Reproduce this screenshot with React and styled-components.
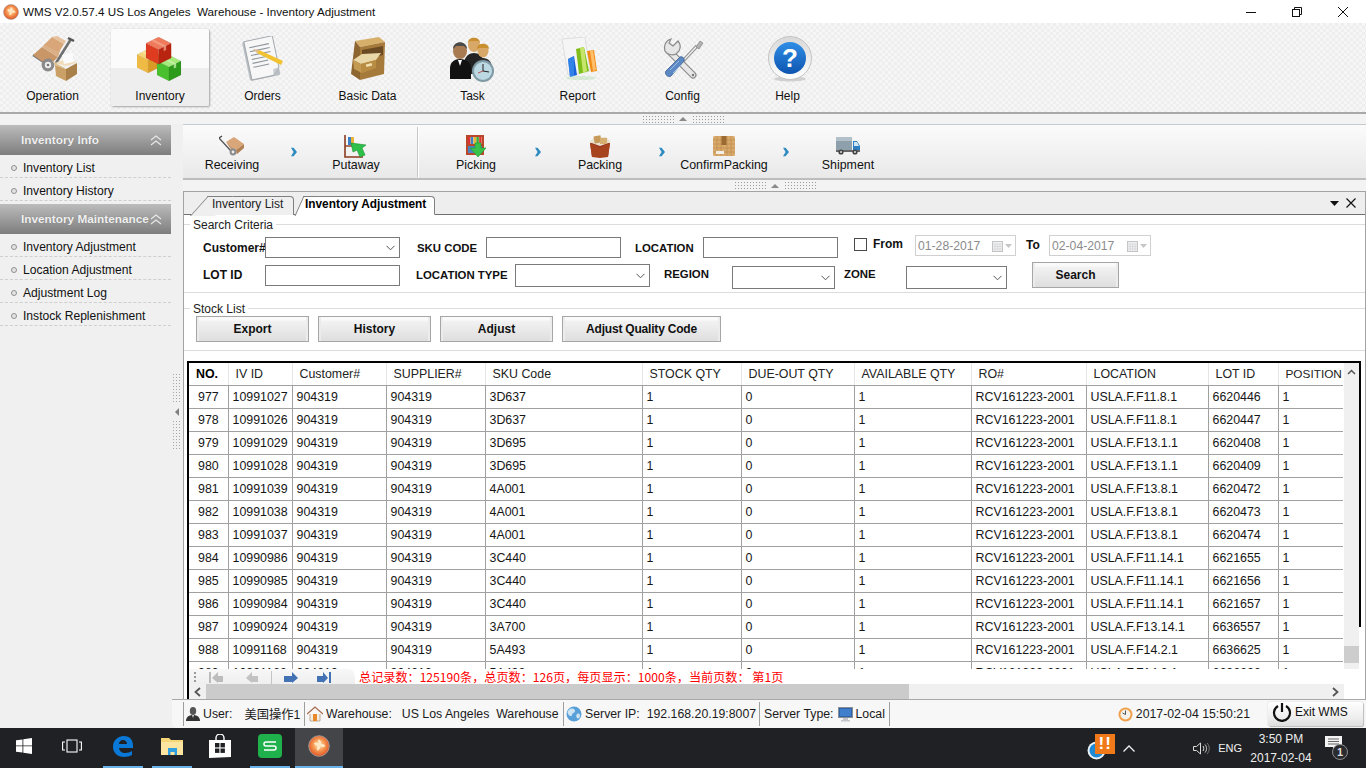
import React from "react";
import styled, { createGlobalStyle } from "styled-components";

const Global = createGlobalStyle`
  html, body { margin: 0; padding: 0; background: #f0f0f0; }
  * { box-sizing: border-box; }
  body { font-family: "Liberation Sans", "Noto Sans CJK SC", sans-serif; font-size: 12px; color: #111; }
`;

const Screen = styled.div`
  width: 1366px; height: 768px; display: flex; flex-direction: column; overflow: hidden; background: #f0f0f0;
`;

/* ---------- title bar ---------- */
const TitleBar = styled.div`
  height: 23px; background: #fff; display: flex; align-items: center; padding-left: 3px; flex: none;
`;
const TitleText = styled.span`
  margin-left: 4px; font-size: 11.65px; white-space: pre; color: #111;
`;
const WindowButtons = styled.div`
  margin-left: auto; display: flex; height: 100%;
`;
const WindowButton = styled.div`
  width: 46px; display: flex; align-items: center; justify-content: center; padding-top: 1px;
`;

/* ---------- main navigation ---------- */
const MainNav = styled.nav`
  height: 89px; flex: none; display: flex; padding-top: 6px;
  background: repeating-conic-gradient(#eeeeee 0 25%, #f6f6f6 0 50%) 0 0 / 6px 6px;
`;
const NavItem = styled.div`
  width: ${p => (p.$active ? "98px" : "105px")};
  margin: ${p => (p.$active ? "0 1px 0 6px" : "0")};
  height: 77px; display: flex; flex-direction: column; align-items: center; padding-top: 7px;
  border-radius: 2px;
  ${p => p.$active && `
    background: linear-gradient(#fbfbfb 0 39px, #eeeeee 39px);
    box-shadow: 1px 1px 2px #a5a5a5, 0 0 1px #c8c8c8;
  `}
`;
const NavIcon = styled.div`
  height: 46px; display: flex; align-items: center; justify-content: center;
`;
const NavLabel = styled.span`
  margin-top: 7px; font-size: 12px; line-height: 14px; color: #111;
`;

/* ---------- splitters ---------- */
const HSplitter = styled.div`
  height: ${p => p.$h}px; flex: none; display: flex; align-items: center; justify-content: center; gap: 5px;
  background: #f3f3f3; ${p => p.$line && "border-top: 2px solid #a9a9a9;"}
`;
const Dots = styled.span`
  width: 32px; height: 9px;
  background-image: radial-gradient(circle, #9c9c9c 0.75px, transparent 0.9px);
  background-size: 3px 3px;
`;
const UpTriangle = styled.span`
  width: 0; height: 0; border-left: 4px solid transparent; border-right: 4px solid transparent;
  border-bottom: 4px solid #8a8a8a;
`;
const VSplitter = styled.div`
  width: 11px; flex: none; display: flex; flex-direction: column; align-items: center; justify-content: center; gap: 4px;
  padding-right: 2px;
`;
const VDots = styled.span`
  width: 9px; height: 31px;
  background-image: radial-gradient(circle, #a8a8a8 0.7px, transparent 0.9px);
  background-size: 3px 3px;
`;
const LeftTriangle = styled.span`
  width: 0; height: 0; border-top: 4px solid transparent; border-bottom: 4px solid transparent;
  border-right: 4px solid #808080;
`;

/* ---------- layout ---------- */
const Body = styled.div`
  flex: 1; display: flex; min-height: 0;
`;
const Sidebar = styled.aside`
  width: 172px; flex: none; padding-top: 1px; background: #f0f0f0;
`;
const SideHeader = styled.div`
  width: 171px; height: 30px; display: flex; align-items: center; justify-content: space-between;
  padding: 0 9px 0 21px; margin-top: ${p => p.$mt || 0}px;
  background: linear-gradient(#bcbcbc, #7d7d7d);
  color: #f0f0f0; font-weight: bold; font-size: 11.8px; white-space: nowrap; text-shadow: 0 0 1px #777;
`;
const SideItem = styled.div`
  width: 171px; height: 23px; display: flex; align-items: center; gap: 6px; padding: 3px 0 0 11px;
  border-bottom: 1px dashed #cfcfcf; font-size: 12.1px; color: #111;
`;
const Bullet = styled.i`
  width: 6px; height: 6px; border-radius: 50%; border: 1px solid #8f8f8f; background: #e4e4e4; flex: none;
`;
const RightColumn = styled.div`
  flex: 1; min-width: 0; display: flex; flex-direction: column;
`;
const UpperRow = styled.div`
  flex: 1; min-height: 0; display: flex;
`;
const Content = styled.main`
  flex: 1; min-width: 0; display: flex; flex-direction: column;
`;

/* ---------- workflow bar ---------- */
const Workflow = styled.div`
  height: 56px; flex: none; display: flex; align-items: center; padding-left: 1px;
  background: linear-gradient(#fbfbfb, #e9e9e9);
  border-top: 1px solid #c4cacd; border-bottom: 2px solid #bdbdbd;
`;
const FlowItem = styled.div`
  width: 96px; height: 100%; display: flex; flex-direction: column; align-items: center; padding-top: 9px;
  font-size: 12.4px; color: #111; white-space: nowrap;
`;
const FlowIcon = styled.div`
  height: 24px; display: flex; align-items: center; justify-content: center;
`;
const FlowLabel = styled.span`
  line-height: 14px;
`;
const FlowArrow = styled.div`
  width: 28px; display: flex; justify-content: center; padding-right: 1px;
`;
const FlowDivider = styled.div`
  width: 2px; height: 50px; margin: 0 9px 0 13px;
  border-left: 1px solid #c8c8c8; border-right: 1px solid #fff;
`;

/* ---------- tab panel ---------- */
const Panel = styled.section`
  flex: 1; min-height: 0; display: flex; flex-direction: column; background: #fff;
  border: 1px solid #a3a3a3; border-bottom: none;
`;
const TabStrip = styled.div`
  height: 23px; flex: none; display: flex; align-items: flex-end; background: #eeeeee;
  border-bottom: 1px solid #707070; padding-left: 23px; position: relative;
`;
const Tab = styled.div`
  position: relative; isolation: isolate; height: 19px; margin-bottom: -1px;
  width: ${p => p.$w}px; margin-left: ${p => p.$ml || 0}px; padding-left: ${p => p.$pl}px;
  z-index: ${p => (p.$active ? 2 : 1)};
  background: ${p => (p.$active ? "#fff" : "#efefef")};
  border-top: 1px solid #808080; border-right: 1px solid #808080; border-top-right-radius: 4px;
  ${p => p.$active && "border-bottom: 1px solid #fff;"}
  font-size: ${p => (p.$active ? "11.85px" : "12px")}; font-weight: ${p => (p.$active ? "bold" : "normal")};
  line-height: 15px; white-space: nowrap; color: ${p => (p.$active ? "#000" : "#222")};
  &::before {
    content: ""; position: absolute; z-index: -1; top: -1px; height: 19px;
    left: ${p => p.$sl}px; width: ${p => p.$sw}px;
    background: inherit; border-left: 1px solid #808080; border-top: 1px solid #808080;
    transform: skewX(-${p => p.$deg}deg);
  }
`;
const TabTools = styled.div`
  margin-left: auto; height: 100%; display: flex; align-items: center; gap: 7px; padding-right: 9px;
`;
const Group = styled.fieldset`
  margin: ${p => p.$mt}px 0 0 0; padding: ${p => p.$pt}px 0 ${p => p.$pb}px 0; min-width: 0; flex: none;
  border: none; border-top: 1px solid #dcdcdc; border-bottom: 1px solid #dcdcdc;
`;
const GroupTitle = styled.legend`
  margin-left: 6px; padding: 2px 3px 0; font-size: 12px; line-height: 14px; color: #222;
`;
const FormRow = styled.div`
  display: flex; align-items: flex-start; padding-left: 19px; height: ${p => p.$h}px; margin-top: ${p => p.$mt || 0}px;
`;
const FieldLabel = styled.label`
  flex: none; width: ${p => p.$w}px; margin-left: ${p => p.$ml || 0}px; margin-top: ${p => p.$mt || 0}px;
  line-height: ${p => p.$lh || 23}px; font-weight: bold; white-space: nowrap; color: #111;
  font-size: ${p => (p.$caps ? "11.4px" : "12px")};
`;
const TextBox = styled.input`
  flex: none; width: 135px; height: 21px; margin: ${p => p.$mt || 0}px 0 0 0; padding: 0 3px;
  border: 1px solid #7a7a7a; background: #fff; outline: none; border-radius: 0;
`;
const Combo = styled.div`
  flex: none; width: ${p => p.$w}px; height: ${p => p.$h || 23}px; margin-top: ${p => p.$mt || 0}px;
  border: 1px solid #7a7a7a; background: #fff;
  display: flex; align-items: center; justify-content: flex-end; padding-right: 4px;
`;
const CheckBox = styled.span`
  flex: none; width: 13px; height: 13px; margin: 1px 0 0 16px; border: 1px solid #4a4a4a; background: #fff;
`;
const DateBox = styled.div`
  flex: none; width: ${p => p.$w}px; height: 21px; margin-top: -2px; padding: 1px 3px 0 2px;
  border: 1px solid #d0d0d0; background: #fff; color: #8b8b8b; font-size: 12.2px;
  display: flex; align-items: center;
`;
const DateTools = styled.span`
  margin-left: auto; display: flex; align-items: center; gap: 2px;
`;
const Btn = styled.button`
  flex: none; width: ${p => p.$w}px; height: 26px; margin: ${p => p.$m || "0"}; padding: 0;
  font: bold 12px "Liberation Sans", sans-serif; color: #111; letter-spacing: ${p => p.$ls || 0}px;
  border: 1px solid #a6a6a6; border-radius: 0;
  background: linear-gradient(#fafafa 0 3px, #f2f2f2 4px, #dedede);
  box-shadow: inset 2px 0 #ececec, inset -2px 0 #ececec;
`;
const ButtonRow = styled.div`
  display: flex; padding-left: 12px; gap: 9px;
`;

/* ---------- data grid ---------- */
const Frame = styled.div`
  position: relative; flex: 1; min-height: 0; margin: 10px 4px 0 3px;
  border-top: 2px solid #000; border-left: 2px solid #000;
  display: flex; flex-direction: column; background: #fff;
  &::after {
    content: ""; position: absolute; top: -2px; right: 0; width: 2px; height: 266px; background: #000;
  }
`;
const GridArea = styled.div`
  height: 306px; flex: none; display: flex;
`;
const GridClip = styled.div`
  flex: 1; min-width: 0; overflow: hidden;
`;
const Table = styled.table`
  border-collapse: collapse; table-layout: fixed; width: 1154px; font-size: 12.4px; color: #161616;
`;
const Th = styled.th`
  height: 22px; padding: 0 0 0 7px; text-align: left; white-space: nowrap; overflow: hidden;
  font-weight: ${p => (p.$first ? "bold" : "normal")}; color: ${p => (p.$first ? "#000" : "#222")};
  border-right: 1px solid #e6e6e6; border-bottom: 1px solid #a0a0a0;
  &:last-child { border-right: none; font-size: 11.8px; }
`;
const Td = styled.td`
  height: 23px; padding: 0 0 0 ${p => p.$first ? 9 : 4}px; white-space: nowrap; overflow: hidden;
  border-right: 1px solid #a0a0a0; border-bottom: 1px solid #a0a0a0;
  &:last-child { border-right: none; }
`;
const VScroll = styled.div`
  width: 15px; flex: none; margin-right: 2px; background: #f0f0f0; display: flex; flex-direction: column; align-items: center;
`;
const ScrollArrow = styled.div`
  height: ${p => p.$h || 17}px; width: ${p => p.$w || 15}px; flex: none; display: flex; align-items: center; justify-content: center;
  ${p => p.$end && "margin-left: auto;"}
`;
const VThumb = styled.div`
  width: 15px; height: 17px; margin-top: auto; margin-bottom: 6px; background: #cdcdcd;
`;
const PagerRow = styled.div`
  height: 15px; flex: none; display: flex; align-items: flex-start; background: #fff;
`;
const PagerTools = styled.div`
  width: 166px; height: 15px; flex: none; overflow: hidden; background: linear-gradient(#f7f7f7, #efefef);
  border-top-right-radius: 7px; display: flex; align-items: flex-start; padding: 2px 0 0 5px;
`;
const PagerGrip = styled.span`
  width: 2px; height: 13px; margin-right: 12px; flex: none;
  background-image: radial-gradient(circle, #9a9a9a 0.8px, transparent 1px); background-size: 2px 4px;
`;
const PagerButton = styled.span`
  width: ${p => p.$w}px; flex: none; display: flex;
`;
const PagerSep = styled.span`
  width: 1px; height: 13px; background: #c4c4c4; margin-right: 12px; flex: none;
`;
const PagerInfo = styled.span`
  margin-left: 4px; color: #f00; font-size: 12.14px; line-height: 15px; white-space: pre;
  font-family: "Noto Sans CJK SC", "Liberation Sans", sans-serif;
`;
const HScroll = styled.div`
  height: 15px; flex: none; margin-right: 17px; background: #f0f0f0; display: flex; align-items: stretch;
`;
const HThumb = styled.div`
  width: 703px; background: #cbcbcb;
`;

/* ---------- status bar ---------- */
const StatusBar = styled.footer`
  height: 29px; flex: none; display: flex; align-items: center; padding: 0 3px 0 11px;
  background: #f7f7f7; border-top: 1px solid #a8a8a8; border-bottom-left-radius: 5px;
  font-size: 12.3px; color: #1a1a1a; white-space: pre;
`;
const StatusSeg = styled.div`
  width: ${p => p.$w}px; flex: none; height: 24px; display: flex; align-items: center; gap: 3px; padding-left: ${p => p.$pl || 2}px;
  border-left: 1px solid #9e9e9e; ${p => p.$end && "border-right: 1px solid #9e9e9e;"}
`;
const StatusValue = styled.span`
  margin-left: ${p => p.$ml}px; display: flex;
`;
const StatusClock = styled.div`
  margin-left: auto; display: flex; align-items: center; gap: 3px;
`;
const ExitButton = styled.div`
  width: 95px; height: 24px; margin-left: 18px; display: flex; align-items: center; gap: 3px; padding: 0 0 4px 4px;
  background: linear-gradient(#fff, #ececec 70%, #dedede); border-radius: 2px;
  box-shadow: 0 0 1px #999, 1px 1px 1px #c0c0c0; font-size: 12px; color: #111;
`;

/* ---------- taskbar ---------- */
const Taskbar = styled.div`
  height: 40px; flex: none; display: flex; align-items: stretch; background: #202124; color: #f2f2f2;
`;
const TaskButton = styled.div`
  width: ${p => p.$w || 40}px; margin-left: ${p => p.$ml || 0}px; flex: none;
  display: flex; align-items: center; justify-content: center; padding-bottom: 2px;
  border-bottom: 2px solid ${p => (p.$open ? "#6cb2ea" : "transparent")};
  background: ${p => (p.$active ? "#444548" : "transparent")};
`;
const Tray = styled.div`
  margin-left: auto; display: flex; align-items: center;
`;
const TrayAlert = styled.div`
  position: relative; width: 28px; height: 40px; display: flex; align-items: flex-end; padding-bottom: 8px;
`;
const AlertBadge = styled.span`
  position: absolute; left: 8px; top: 6px; width: 20px; height: 20px; background: #f07a1a;
  color: #fff; font: bold 17px/19px "Liberation Sans", sans-serif; text-align: center; letter-spacing: 1px;
`;
const TrayItem = styled.span`
  margin-left: ${p => p.$ml}px; display: flex; align-items: center; font-size: ${p => p.$fs || 12}px;
`;
const TrayClock = styled.div`
  margin-left: 10px; width: 58px; padding-top: 1px; text-align: center; font-size: 12px; line-height: 19px; white-space: nowrap;
  color: #eee; display: flex; flex-direction: column; align-items: center;
`;
const Notify = styled.div`
  position: relative; width: 20px; height: 24px; margin: 0 21px 0 15px;
`;
const NotifyCount = styled.span`
  position: absolute; left: 7px; top: 8px; width: 16px; height: 16px; border-radius: 50%;
  background: #2a2b2e; border: 1px solid #8d8d8d; color: #ddd; font: bold 11px/14px "Liberation Sans", sans-serif; text-align: center;
`;

/* ---------- drawings ---------- */
const AppLogo = ({ s = 16 }) => (
  <svg width={s} height={s} viewBox="0 0 16 16">
    <defs>
      <radialGradient id={`lg${s}`} cx=".5" cy=".45" r=".6"><stop offset="0" stopColor="#fff3c8" /><stop offset=".45" stopColor="#f79a55" /><stop offset="1" stopColor="#d9481c" /></radialGradient>
    </defs>
    <circle cx="8" cy="8" r="7.5" fill={`url(#lg${s})`} stroke="#a8a0a0" strokeWidth=".6" />
    <path d="M8 3c1.6 1 2 2.6 1.2 3.8 1.4-.6 3 0 3.4 1.4-1.4 1-3 .8-3.8-.2.2 1.6-.6 3-2 3.4-.8-1.4-.4-3 .8-3.8-1.6.4-3-.4-3.4-1.8 1.4-.8 3-.4 3.8.6C7.2 5.2 7 4 8 3z" fill="#ffe9c4" />
  </svg>
);

const Cube = ({ x, y, s, top, left, right, tape }) => (
  <g transform={`translate(${x} ${y}) scale(${s})`}>
    <polygon points="0,3 6,0 12,3 6,6" fill={top} stroke="#0003" strokeWidth=".15" />
    <polygon points="0,3 6,6 6,13 0,10" fill={left} stroke="#0002" strokeWidth=".15" />
    <polygon points="6,6 12,3 12,10 6,13" fill={right} stroke="#0002" strokeWidth=".15" />
    <polygon points="2.4,1.800 3.600,1.200 9.600,4.200 9.600,6.200 8.400,6.800 8.400,4.800" fill={tape} opacity=".75" />
  </g>
);

const OperationIcon = () => (
  <svg width="48" height="46" viewBox="-3 0 48 46">
    <path d="M24 27 39 3" stroke="#6f6f6f" strokeWidth="2.6" fill="none" />
    <path d="M36 2l6 3" stroke="#555" strokeWidth="2.4" />
    <path d="M1 19 19 31" stroke="#7c7c7c" strokeWidth="2.4" />
    <polygon points="1,19 10,11 26,21 17,30" fill="#c99668" />
    <polygon points="10,11 14,7 28,15 26,21" fill="#dcb086" />
    <polygon points="12,9 20,1 32,8 27,16" fill="#d8a678" />
    <polygon points="20,1 25,0 34,5 32,8" fill="#e6c19c" />
    <circle cx="16" cy="29" r="6.4" fill="#8a8a8a" /><circle cx="16" cy="29" r="3.2" fill="#eee" /><circle cx="16" cy="29" r="1.3" fill="#777" />
    <polygon points="23,27 34,23 45,26 35,30" fill="#f0dcb8" />
    <polygon points="30,19 40,17 42,26 32,28" fill="#fbfbfb" />
    <polygon points="23,29 34,33 34,45 24,40" fill="#caa067" />
    <polygon points="34,33 45,27 45,38 34,45" fill="#a97f4a" />
    <polygon points="23,29 20,25 31,31 34,33" fill="#e0c18f" />
  </svg>
);
const InventoryIcon = () => (
  <svg width="46" height="44" viewBox="0 0 46 44">
    <Cube x="0" y="12" s="1.85" top="#f6d67c" left="#efbb45" right="#d99a26" tape="#fbe8ad" />
    <Cube x="20" y="18" s="2" top="#a5ea7a" left="#4bc02f" right="#2c9a1b" tape="#c9f3ad" />
    <Cube x="9" y="0" s="2.1" top="#ef7b5c" left="#df3b20" right="#b82410" tape="#f4a48c" />
  </svg>
);
const OrdersIcon = () => (
  <svg width="48" height="46" viewBox="0 0 48 46">
    <g transform="rotate(-12 20 24)">
      <rect x="7" y="3" width="31" height="40" rx="2" fill="#b9bec4" />
      <path d="M9 3h29v32l-7 7H9z" fill="#f7f7f7" stroke="#9aa0a6" strokeWidth=".8" />
      <path d="M31 42l7-7-6 1z" fill="#c8ccd0" />
      {[10, 14, 18, 22, 26, 30].map(y => <path key={y} d={`M13 ${y}h${y < 20 ? 20 : 16}`} stroke="#8d949b" strokeWidth="1.1" />)}
    </g>
    <path d="M20 14 44 25l-2 4L18 17z" fill="#f2c230" />
    <path d="M18 17l2-3-6-1z" fill="#e0b98a" />
  </svg>
);
const CabinetIcon = () => (
  <svg width="40" height="46" viewBox="0 0 40 46">
    <polygon points="7,5 31,1 37,6 12,11" fill="#d6b06a" />
    <polygon points="7,5 12,11 12,44 3,38" fill="#8d6530" />
    <polygon points="12,11 37,6 36,38 12,44" fill="#a67a3a" />
    <polygon points="14,14 35,10 35,19 14,24" fill="#6a4a22" />
    <polygon points="5,24 14,18 33,17 28,24 13,28" fill="#e9d7a8" />
    <polygon points="5,24 13,28 14,37 6,33" fill="#c49a52" />
    <polygon points="13,28 28,24 28,32 14,37" fill="#b98c44" />
    <rect x="18" y="28" width="6" height="2.5" fill="#f0e0b0" transform="rotate(-14 20 29)" />
  </svg>
);
const TaskIcon = () => (
  <svg width="48" height="46" viewBox="-1 0 48 46">
    <ellipse cx="24" cy="9" rx="6" ry="7" fill="#d7a868" /><path d="M18 7c0-7 12-7 12 0l-2-2h-8z" fill="#c98e2d" />
    <path d="M14 28c0-8 6-11 10-11s10 3 10 11v10H14z" fill="#232323" />
    <ellipse cx="33" cy="15" rx="5.5" ry="6.5" fill="#d7a868" /><path d="M27 13c0-7 12-7 12 0l-2-1h-8z" fill="#c98e2d" />
    <path d="M24 34c0-8 4-12 9-12s9 4 9 10v3z" fill="#2b2b2b" />
    <ellipse cx="10" cy="15" rx="7" ry="8" fill="#a97b52" /><path d="M3 13c0-9 14-9 14 0l-3-3H6z" fill="#4a4a4a" />
    <path d="M0 42V32c0-6 5-9 10-9s11 3 11 9v11H0z" fill="#111" />
    <path d="M8 24l2 6 2-6z" fill="#fff" />
    <circle cx="33" cy="35" r="11" fill="#7f9aa4" /><circle cx="33" cy="35" r="9" fill="#bcd8e2" />
    <path d="M33 28v7l6 1" stroke="#222" strokeWidth="1" fill="none" /><path d="M33 35l-5 2" stroke="#b33" strokeWidth=".8" />
  </svg>
);
const ReportIcon = () => (
  <svg width="42" height="44" viewBox="-2 0 42 44">
    <polygon points="3,2 26,0 31,34 9,38" fill="#f4f5f4" stroke="#d8d8d8" strokeWidth=".8" />
    <polygon points="9,22 15,19 18,38 11,40" fill="#1a62d8" /><polygon points="9,22 15,19 15,39 11,40" fill="#3b8ff0" opacity=".7" />
    <polygon points="17,12 25,10 30,34 20,37" fill="#7fbd18" /><polygon points="21,11 25,10 28,34 24,36" fill="#c6e56a" />
    <polygon points="28,14 35,13 38,34 32,35" fill="#f08b16" /><polygon points="31,14 34,13 37,33 34,34" fill="#ffbf6a" />
    <ellipse cx="22" cy="41" rx="15" ry="2" fill="#b8dfb8" opacity=".5" />
  </svg>
);
const ConfigIcon = () => (
  <svg width="42" height="44" viewBox="-1 0 42 44">
    <path d="M5 13 30 38" stroke="#8c8c8c" strokeWidth="7" strokeLinecap="round" />
    <path d="M5 13 30 38" stroke="#e8e8e8" strokeWidth="4.6" strokeLinecap="round" />
    <path d="M8 2A9 9 0 0 0 2 14a9 9 0 0 0 11 3l3-3a9 9 0 0 0-1-10l-5 5-4-3z" fill="#e6e6e6" stroke="#8a8a8a" strokeWidth="1.2" />
    <circle cx="30" cy="38" r="1.2" fill="#777" />
    <path d="M20 24 34 9" stroke="#909090" strokeWidth="3.4" />
    <path d="M20 24 34 9" stroke="#eee" strokeWidth="1.4" />
    <path d="M33 10l4-6 3 2-4 6z" fill="#b2b2b2" stroke="#777" strokeWidth=".6" />
    <path d="M3 34 17 20c2-1 5 1 4 4L8 39c-3 2-7-2-5-5z" fill="#5c88c4" stroke="#39608f" strokeWidth=".8" />
    <path d="M7 33l9-9M10 36l8-8" stroke="#9dbde4" strokeWidth="1" />
  </svg>
);
const HelpIcon = () => (
  <svg width="50" height="46" viewBox="-4 0 50 46">
    <defs>
      <linearGradient id="helpb" x1="0" y1="0" x2="0" y2="1"><stop offset="0" stopColor="#2f8ee6" /><stop offset="1" stopColor="#0e55b0" /></linearGradient>
      <linearGradient id="helpr" x1="0" y1="0" x2="0" y2="1"><stop offset="0" stopColor="#d8d8d8" /><stop offset="1" stopColor="#fff" /></linearGradient>
    </defs>
    <ellipse cx="23" cy="43" rx="16" ry="2.4" fill="#bbb" opacity=".6" />
    <circle cx="23" cy="22" r="21.5" fill="url(#helpr)" stroke="#c4c4c4" />
    <circle cx="23" cy="22" r="16" fill="url(#helpb)" />
    <text x="23" y="31" textAnchor="middle" fontFamily="Liberation Sans" fontWeight="bold" fontSize="26" fill="#fff">?</text>
  </svg>
);

const ReceivingIcon = () => (
  <svg width="26" height="22" viewBox="0 0 26 22">
    <path d="M0 3 12 16" stroke="#555" strokeWidth="1.3" />
    <path d="M0 3l3-2" stroke="#444" strokeWidth="1.3" />
    <polygon points="7,7 15,2 25,9 17,15" fill="#d9a679" />
    <polygon points="17,15 25,9 25,13 18,19" fill="#b07f52" />
    <polygon points="7,7 17,15 18,19 11,13" fill="#c4956a" />
    <circle cx="14" cy="17" r="3.4" fill="#8b8b8b" /><circle cx="14" cy="17" r="1.4" fill="#eee" />
  </svg>
);
const PutawayIcon = () => (
  <svg width="24" height="24" viewBox="0 0 24 24">
    <path d="M1 1v22h18" stroke="#8a3a1e" strokeWidth="1.6" fill="none" />
    <path d="M1 12h10" stroke="#8a3a1e" strokeWidth="1.4" />
    <rect x="4" y="3" width="3" height="8" fill="#3b7fc8" /><rect x="7" y="3" width="3" height="8" fill="#eab33a" />
    <path d="M7 9l15 2-4 3 3 7-5 2-3-7-4 2z" fill="#2ec04a" stroke="#18902e" strokeWidth=".6" />
  </svg>
);
const PickingIcon = () => (
  <svg width="22" height="24" viewBox="0 0 22 24">
    <rect x="1" y="1" width="18" height="20" fill="#b8472b" />
    <rect x="3" y="3" width="14" height="7" fill="#f3e7c7" />
    {["#d33", "#3b7fc8", "#eab33a", "#3a3", "#d33"].map((c, i) => <rect key={i} x={3 + i * 2.8} y="3" width="2.4" height="7" fill={c} />)}
    <rect x="3" y="12" width="14" height="7" fill="#4b85bf" />
    <path d="M10 9h6v5h5l-8 9-8-9h5z" fill="#38c24a" stroke="#1e9a33" strokeWidth=".6" />
  </svg>
);
const PackingIcon = () => (
  <svg width="22" height="23" viewBox="0 0 22 23">
    <polygon points="1,8 21,8 19,22 3,22" fill="#9a3a1c" />
    <polygon points="1,8 11,13 21,8 19,22 11,23 3,22" fill="#a8431f" />
    <polygon points="0,7 5,3 17,2 22,7 11,11" fill="#e8e0d0" />
    <rect x="5" y="1" width="7" height="7" fill="#c79a5a" transform="rotate(-10 8 4)" /><rect x="11" y="3" width="7" height="6" fill="#d6ae70" />
  </svg>
);
const ConfirmIcon = () => (
  <svg width="24" height="22" viewBox="0 0 24 22">
    <rect x="1" y="1" width="22" height="20" rx="1.5" fill="#d8a96a" />
    {[5, 9, 13, 17].map(v => <path key={`h${v}`} d={`M1 ${v}h22`} stroke="#b98a4c" strokeWidth=".6" />)}
    {[5, 9, 15, 19].map(v => <path key={`v${v}`} d={`M${v} 1v20`} stroke="#b98a4c" strokeWidth=".6" />)}
    <rect x="9.5" y="1" width="5" height="9" fill="#9a6a30" />
    <rect x="4" y="16" width="8" height="3" fill="#f1efe8" />
  </svg>
);
const ShipmentIcon = () => (
  <svg width="26" height="20" viewBox="0 0 26 20">
    <rect x="1" y="1" width="16" height="13" fill="#8ea0ac" /><rect x="1" y="1" width="16" height="4" fill="#b1c0c9" />
    <path d="M18 5h4l3 5v5h-7z" fill="#2f7fc0" /><path d="M19 6h3l2 4h-5z" fill="#cfe6f5" />
    <rect x="1" y="14" width="24" height="2" fill="#666" />
    <circle cx="6" cy="16" r="2.6" fill="#444" /><circle cx="6" cy="16" r="1" fill="#ddd" />
    <circle cx="20" cy="16" r="2.6" fill="#444" /><circle cx="20" cy="16" r="1" fill="#ddd" />
  </svg>
);

const Chevron = () => (
  <svg width="6" height="10" viewBox="0 0 7 10"><path d="M0 0h3l4 5-4 5H0l3-5z" fill="#2f8cc0" /></svg>
);
const DoubleUp = () => (
  <svg width="12" height="12" viewBox="0 0 12 12" fill="none" stroke="#e8e8e8" strokeWidth="1.1"><path d="M1 6l5-4 5 4M1 11l5-4 5 4" /></svg>
);
const ComboArrow = () => (
  <svg width="9" height="6" viewBox="0 0 9 6" fill="none" stroke="#555" strokeWidth="1"><path d="M.5.8 4.5 4.8 8.5.8" /></svg>
);
const MiniCalendar = () => (
  <svg width="11" height="11" viewBox="0 0 11 11"><rect x=".5" y=".5" width="10" height="10" fill="#eef0f2" stroke="#c4c4c4" /><path d="M.5 3h10M3 3v7M5.5 3v7M8 3v7M.5 5.5h10M.5 8h10" stroke="#d2d2d2" strokeWidth=".6" /></svg>
);
const MiniDown = () => (
  <svg width="7" height="4" viewBox="0 0 7 4"><path d="M0 0h7L3.5 4z" fill="#c6c6c6" /></svg>
);
const UserIcon = () => (
  <svg width="14" height="16" viewBox="0 0 14 16"><ellipse cx="7" cy="5" rx="3.2" ry="4" fill="#555" /><path d="M0 15c0-4 3-6 7-6s7 2 7 6z" fill="#333" /><path d="M6 9l1 3 1-3z" fill="#ddd" /></svg>
);
const HouseIcon = () => (
  <svg width="16" height="16" viewBox="0 0 16 16"><path d="M3 8v7h10V8" fill="#f3ede3" stroke="#b49a80" strokeWidth=".8" /><path d="M0 8l8-7 8 7" fill="none" stroke="#a5694a" strokeWidth="1.3" /><rect x="6" y="8" width="4" height="7" fill="#e88a2c" /></svg>
);
const GlobeIcon = () => (
  <svg width="16" height="16" viewBox="0 0 16 16"><circle cx="8" cy="8" r="7.5" fill="#5aa0d8" /><path d="M4 3c3-1 5 0 5 2S6 7 6 9 3 10 2 8s0-4 2-5zM11 8c2-1 3 0 3 2s-2 3-3 2-1-3 0-4z" fill="#cfe4f3" /></svg>
);
const MonitorIcon = () => (
  <svg width="15" height="15" viewBox="0 0 15 15"><rect x=".5" y=".5" width="14" height="10" fill="#2f64a8" stroke="#8a8f96" /><rect x="2" y="2" width="11" height="7" fill="#3f7fcb" /><path d="M5 11h5v2H5zM3 13h9v1.500H3z" fill="#c2c6ca" /></svg>
);
const ClockIcon = () => (
  <svg width="15" height="15" viewBox="0 0 15 15"><circle cx="7.500" cy="7.500" r="7" fill="#f0a04a" /><circle cx="7.500" cy="7.500" r="5" fill="#f4f1ea" /><path d="M7.500 3.500v4L4.500 6" stroke="#555" strokeWidth="1" fill="none" /></svg>
);
const PowerIcon = () => (
  <svg width="20" height="20" viewBox="0 0 20 20" fill="none" stroke="#111" strokeWidth="2.2"><path d="M6 4a8 8 0 1 0 8 0" /><path d="M10 1v9" /></svg>
);
const WinLogo = () => (
  <svg width="16" height="16" viewBox="0 0 16 16" fill="#fff"><path d="M0 2.300 6.500 1.400V7.500H0zM7.300 1.300 16 0v7.500H7.300zM0 8.300h6.500v6.300L0 13.700zM7.300 8.300H16V16l-8.700-1.200z" /></svg>
);
const TaskViewIcon = () => (
  <svg width="20" height="14" viewBox="0 0 20 14" fill="none" stroke="#fff" strokeWidth="1.1"><rect x="5" y="1" width="10" height="12" /><path d="M3 3H.6v8H3M17 3h2.400v8H17" /></svg>
);
const EdgeIcon = () => (
  <svg width="22" height="22" viewBox="0 0 22 22"><path d="M1 12C1 5 6 1 12 1c6 0 9 4 9 10v2H7c.3 3 3 5 6 5 3 0 5-1 7-2v4c-2 1-5 2-8 2-6 0-11-4-11-10zM7 9h8c0-2-1.500-4-4-4S7 7 7 9z" fill="#0a78d7" /></svg>
);
const FolderIcon = () => (
  <svg width="22" height="19" viewBox="0 0 22 19"><path d="M0 1h8l2 2h12v15H0z" fill="#f6d678" /><path d="M0 5h22v13H0z" fill="#fbe5a0" /><path d="M7 11h9v7h-2.500v-3h-4v3H7z" fill="#2f9fe0" /></svg>
);
const StoreIcon = () => (
  <svg width="22" height="24" viewBox="0 0 22 24" fill="#fff"><path d="M7 6V4a4 4 0 0 1 8 0v2" fill="none" stroke="#fff" strokeWidth="1.4" /><path d="M0 6h22v17L0 24z" /><g fill="#202124"><rect x="6" y="9" width="4.400" height="4.400" /><rect x="11.500" y="9" width="4.400" height="4.400" /><rect x="6" y="14.500" width="4.400" height="4.400" /><rect x="11.500" y="14.500" width="4.400" height="4.400" /></g></svg>
);
const SheetIcon = () => (
  <svg width="24" height="24" viewBox="0 0 24 24"><rect width="24" height="24" rx="4" fill="#1fb14c" /><path d="M18 8H8a2 2 0 0 0 0 4h8a2 2 0 0 1 0 4H6" fill="none" stroke="#fff" strokeWidth="1.500" /></svg>
);
const SpeakerIcon = () => (
  <svg width="17" height="13" viewBox="0 0 17 13" fill="none" stroke="#ddd" strokeWidth="1"><path d="M.5 4.500h3l4-3.500v11l-4-3.500h-3z" /><path d="M10 4c1 1 1 4 0 5M12 2.500c2 2 2 6 0 8" /><path d="M14 1c3 3 3 8 0 11" stroke="#777" /></svg>
);
const TrayUp = () => (
  <svg width="12" height="7" viewBox="0 0 12 7" fill="none" stroke="#eee" strokeWidth="1.300"><path d="M.5 6.500 6 1l5.500 5.500" /></svg>
);
const NoteIcon = () => (
  <svg width="17" height="15" viewBox="0 0 17 15"><path d="M0 0h17v11h-6l-3 3v-3H0z" fill="#f4f4f4" /><path d="M3 3h11M3 5.500h11M3 8h11" stroke="#555" strokeWidth=".9" /></svg>
);

/* ---------- data ---------- */
const columns = [
  ["NO.", 39], ["IV ID", 64], ["Customer#", 94], ["SUPPLIER#", 99], ["SKU Code", 157], ["STOCK QTY", 99],
  ["DUE-OUT QTY", 113], ["AVAILABLE QTY", 117], ["RO#", 115], ["LOCATION", 122], ["LOT ID", 70], ["POSITION", 65],
];
const rows = [
  [977, 10991027, "3D637", "F11.8.1", 6620446], [978, 10991026, "3D637", "F11.8.1", 6620447],
  [979, 10991029, "3D695", "F13.1.1", 6620408], [980, 10991028, "3D695", "F13.1.1", 6620409],
  [981, 10991039, "4A001", "F13.8.1", 6620472], [982, 10991038, "4A001", "F13.8.1", 6620473],
  [983, 10991037, "4A001", "F13.8.1", 6620474], [984, 10990986, "3C440", "F11.14.1", 6621655],
  [985, 10990985, "3C440", "F11.14.1", 6621656], [986, 10990984, "3C440", "F11.14.1", 6621657],
  [987, 10990924, "3A700", "F13.14.1", 6636557], [988, 10991168, "5A493", "F14.2.1", 6636625],
  [989, 10991166, "5A493", "F14.2.1", 6636626],
];
const navItems = [
  ["Operation", OperationIcon], ["Inventory", InventoryIcon, true], ["Orders", OrdersIcon], ["Basic Data", CabinetIcon],
  ["Task", TaskIcon], ["Report", ReportIcon], ["Config", ConfigIcon], ["Help", HelpIcon],
];

const Flow = ({ label, Icon }) => (
  <FlowItem><FlowIcon><Icon /></FlowIcon><FlowLabel>{label}</FlowLabel></FlowItem>
);
const Arrow = () => <FlowArrow><Chevron /></FlowArrow>;
const Side = ({ children }) => <SideItem><Bullet />{children}</SideItem>;
const DateField = ({ w, children }) => (
  <DateBox $w={w}>{children}<DateTools><MiniCalendar /><MiniDown /></DateTools></DateBox>
);
const Grip = () => (
  <><Dots /><UpTriangle /><Dots /></>
);

export default function App() {
  return (
    <Screen>
      <Global />
      <TitleBar>
        <AppLogo />
        <TitleText>WMS V2.0.57.4 US Los Angeles  Warehouse - Inventory Adjustment</TitleText>
        <WindowButtons>
          <WindowButton><svg width="10" height="10" viewBox="0 0 10 10"><path d="M0 5.500h10" stroke="#111" /></svg></WindowButton>
          <WindowButton><svg width="10" height="10" viewBox="0 0 10 10" fill="none" stroke="#111"><rect x=".5" y="2.500" width="7" height="7" /><path d="M2.500 2.500V.5h7v7h-2" /></svg></WindowButton>
          <WindowButton><svg width="10" height="10" viewBox="0 0 10 10" stroke="#111"><path d="M0 0l10 10M10 0 0 10" /></svg></WindowButton>
        </WindowButtons>
      </TitleBar>

      <MainNav>
        {navItems.map(([label, Icon, active]) => (
          <NavItem key={label} $active={active}>
            <NavIcon><Icon /></NavIcon>
            <NavLabel>{label}</NavLabel>
          </NavItem>
        ))}
      </MainNav>
      <HSplitter $h={12} $line><Grip /></HSplitter>

      <Body>
        <Sidebar>
          <SideHeader>Inventory Info<DoubleUp /></SideHeader>
          <Side>Inventory List</Side>
          <Side>Inventory History</Side>
          <SideHeader $mt={3}>Inventory Maintenance<DoubleUp /></SideHeader>
          <Side>Inventory Adjustment</Side>
          <Side>Location Adjustment</Side>
          <Side>Adjustment Log</Side>
          <Side>Instock Replenishment</Side>
        </Sidebar>

        <RightColumn>
          <UpperRow>
            <VSplitter><VDots /><LeftTriangle /><VDots /></VSplitter>
            <Content>
              <Workflow>
                <Flow label="Receiving" Icon={ReceivingIcon} />
                <Arrow />
                <Flow label="Putaway" Icon={PutawayIcon} />
                <FlowDivider />
                <Flow label="Picking" Icon={PickingIcon} />
                <Arrow />
                <Flow label="Packing" Icon={PackingIcon} />
                <Arrow />
                <Flow label="ConfirmPacking" Icon={ConfirmIcon} />
                <Arrow />
                <Flow label="Shipment" Icon={ShipmentIcon} />
              </Workflow>
              <HSplitter $h={11}><Grip /></HSplitter>

              <Panel>
                <TabStrip>
                  <Tab $w={87} $pl={5} $sl={-8} $sw={24} $deg={42}>Inventory List</Tab>
                  <Tab $active $w={131} $ml={10} $pl={1} $sl={-5} $sw={14} $deg={24}>Inventory Adjustment</Tab>
                  <TabTools>
                    <svg width="9" height="5" viewBox="0 0 9 5"><path d="M0 0h9L4.500 5z" fill="#111" /></svg>
                    <svg width="10" height="10" viewBox="0 0 10 10" stroke="#111" strokeWidth="1.200"><path d="M.5.5l9 9M9.500.5l-9 9" /></svg>
                  </TabTools>
                </TabStrip>

                <Group $mt={1} $pt={5} $pb={3}>
                  <GroupTitle>Search Criteria</GroupTitle>
                  <FormRow $h={21}>
                    <FieldLabel $w={62}>Customer#</FieldLabel>
                    <Combo $w={135} $h={21}><ComboArrow /></Combo>
                    <FieldLabel $w={69} $ml={17} $caps>SKU CODE</FieldLabel>
                    <TextBox />
                    <FieldLabel $w={68} $ml={14} $caps>LOCATION</FieldLabel>
                    <TextBox />
                    <CheckBox />
                    <FieldLabel $w={42} $ml={6} $mt={-4}>From</FieldLabel>
                    <DateField w={101}>01-28-2017</DateField>
                    <FieldLabel $w={23} $ml={10} $mt={-3}>To</FieldLabel>
                    <DateField w={102}>02-04-2017</DateField>
                  </FormRow>
                  <FormRow $h={27} $mt={4}>
                    <FieldLabel $w={62} $lh={26}>LOT ID</FieldLabel>
                    <TextBox $mt={3} />
                    <FieldLabel $w={99} $ml={16} $lh={26} $caps>LOCATION TYPE</FieldLabel>
                    <Combo $w={135} $mt={2}><ComboArrow /></Combo>
                    <FieldLabel $w={68} $ml={14} $lh={24} $caps>REGION</FieldLabel>
                    <Combo $w={103} $mt={4}><ComboArrow /></Combo>
                    <FieldLabel $w={62} $ml={9} $lh={24} $caps>ZONE</FieldLabel>
                    <Combo $w={101} $mt={4}><ComboArrow /></Combo>
                    <Btn $w={87} $m="0 0 0 25px">Search</Btn>
                  </FormRow>
                </Group>

                <Group $mt={7} $pt={0} $pb={8}>
                  <GroupTitle>Stock List</GroupTitle>
                  <ButtonRow>
                    <Btn $w={113}>Export</Btn>
                    <Btn $w={113}>History</Btn>
                    <Btn $w={113}>Adjust</Btn>
                    <Btn $w={159} $ls={-0.2}>Adjust Quality Code</Btn>
                  </ButtonRow>
                </Group>

                <Frame>
                  <GridArea>
                    <GridClip>
                      <Table>
                        <colgroup>{columns.map(([name, w]) => <col key={name} width={w} />)}</colgroup>
                        <thead>
                          <tr>{columns.map(([name], i) => <Th key={name} $first={i === 0}>{name}</Th>)}</tr>
                        </thead>
                        <tbody>
                          {rows.map(([no, iv, sku, loc, lot]) => (
                            <tr key={no}>
                              <Td $first>{no}</Td><Td>{iv}</Td><Td>904319</Td><Td>904319</Td><Td>{sku}</Td>
                              <Td>1</Td><Td>0</Td><Td>1</Td><Td>RCV161223-2001</Td>
                              <Td>USLA.F.{loc}</Td><Td>{lot}</Td><Td>1</Td>
                            </tr>
                          ))}
                        </tbody>
                      </Table>
                    </GridClip>
                    <VScroll>
                      <ScrollArrow><svg width="9" height="6" viewBox="0 0 9 6" fill="none" stroke="#555" strokeWidth="1.500"><path d="M1 5l3.500-3.500L8 5" /></svg></ScrollArrow>
                      <VThumb />
                    </VScroll>
                  </GridArea>
                  <PagerRow>
                    <PagerTools>
                      <PagerGrip />
                      <PagerButton $w={38}><svg width="16" height="14" viewBox="0 0 16 14"><path d="M1 1v11h2V1zM4 7l6-6v4h5v6h-5v1z" fill="#bcbcbc" /></svg></PagerButton>
                      <PagerButton $w={25}><svg width="12" height="14" viewBox="0 0 12 14"><path d="M0 7l6-6v4h6v6H6v1z" fill="#c2c2c2" /></svg></PagerButton>
                      <PagerSep />
                      <PagerButton $w={33}><svg width="14" height="14" viewBox="0 0 14 14"><path d="M14 7 8 1v4H0v6h8v1z" fill="#4272b4" /></svg></PagerButton>
                      <PagerButton $w={15}><svg width="15" height="14" viewBox="0 0 15 14"><path d="M14 1v11h-2V1zM11 7 6 1v4H0v6h6v1z" fill="#4272b4" /></svg></PagerButton>
                    </PagerTools>
                    <PagerInfo>总记录数：125190条，总页数：126页，每页显示：1000条，当前页数： 第1页</PagerInfo>
                  </PagerRow>
                  <HScroll>
                    <ScrollArrow $w={17} $h={15}><svg width="7" height="10" viewBox="0 0 7 10" fill="none" stroke="#555" strokeWidth="1.800"><path d="M6 1 1.500 5 6 9" /></svg></ScrollArrow>
                    <HThumb />
                    <ScrollArrow $w={17} $h={15} $end><svg width="7" height="10" viewBox="0 0 7 10" fill="none" stroke="#555" strokeWidth="1.800"><path d="M1 1l4.500 4L1 9" /></svg></ScrollArrow>
                  </HScroll>
                </Frame>
              </Panel>
            </Content>
          </UpperRow>

          <StatusBar>
            <StatusSeg $w={121}><UserIcon /><span>User:</span><StatusValue $ml={9}>美国操作1</StatusValue></StatusSeg>
            <StatusSeg $w={259}><HouseIcon /><span>Warehouse:</span><StatusValue $ml={7}>US Los Angeles  Warehouse</StatusValue></StatusSeg>
            <StatusSeg $w={196}><GlobeIcon /><span>Server IP:</span><StatusValue $ml={4}>192.168.20.19:8007</StatusValue></StatusSeg>
            <StatusSeg $w={131} $end $pl={4}><span>Server Type:</span><StatusValue $ml={1}><MonitorIcon /></StatusValue><span>Local</span></StatusSeg>
            <StatusClock><ClockIcon />2017-02-04 15:50:21</StatusClock>
            <ExitButton><PowerIcon />Exit WMS</ExitButton>
          </StatusBar>
        </RightColumn>
      </Body>

      <Taskbar>
        <TaskButton $w={48}><WinLogo /></TaskButton>
        <TaskButton $w={48}><TaskViewIcon /></TaskButton>
        <TaskButton $ml={7} $open><EdgeIcon /></TaskButton>
        <TaskButton $ml={9} $open><FolderIcon /></TaskButton>
        <TaskButton $ml={8}><StoreIcon /></TaskButton>
        <TaskButton $ml={10} $open><SheetIcon /></TaskButton>
        <TaskButton $ml={5} $w={48} $open $active><AppLogo s={22} /></TaskButton>
        <Tray>
          <TrayAlert>
            <svg width="19" height="19" viewBox="0 0 19 19"><circle cx="9.500" cy="9.500" r="9" fill="#eaf3fa" /><circle cx="9.500" cy="9.500" r="7" fill="#1e8ad6" /></svg>
            <AlertBadge>!!</AlertBadge>
          </TrayAlert>
          <TrayItem $ml={8}><TrayUp /></TrayItem>
          <TrayItem $ml={58}><SpeakerIcon /></TrayItem>
          <TrayItem $ml={8} $fs={11}>ENG</TrayItem>
          <TrayClock><span>3:50 PM</span><span>2017-02-04</span></TrayClock>
          <Notify><NoteIcon /><NotifyCount>1</NotifyCount></Notify>
        </Tray>
      </Taskbar>
    </Screen>
  );
}
